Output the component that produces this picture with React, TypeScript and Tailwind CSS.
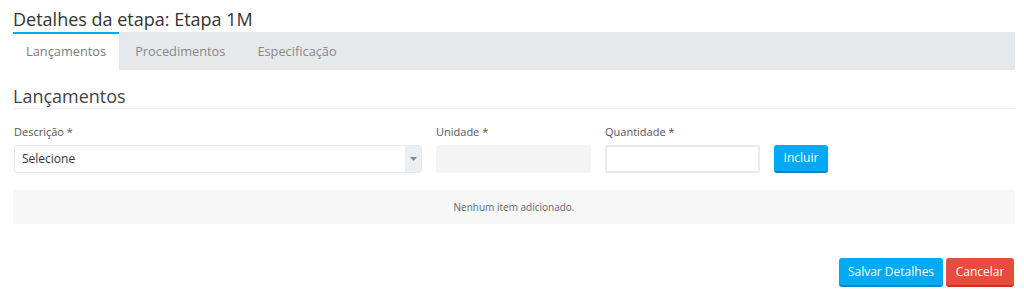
import React from "react";

const tabs = ["Lançamentos", "Procedimentos", "Especificação"];

const App = () => {
  return (
    <div
      className="w-[1024px] h-[295px] bg-white text-[#333] overflow-hidden"
      style={{ fontFamily: '"Open Sans", sans-serif' }}
    >
      <div className="ml-[13px] w-[1002px] pt-[7px]">
        <h1 className="text-[18px] leading-[25px] text-[#333] h-[25px]">
          Detalhes da etapa: Etapa 1M
        </h1>
        <div className="flex bg-[#e6e9ec] h-[38px]">
          {tabs.map((t, i) => (
            <div
              key={t}
              className={
                i === 0
                  ? "bg-white border-t-2 border-[#03a9f4] px-[13px] flex items-center text-[12.8px] text-[#7a7a7a]"
                  : "px-[16px] pt-[2px] flex items-center text-[12.8px] text-[#888]"
              }
            >
              {t}
            </div>
          ))}
        </div>

        <h2 className="mt-[14px] text-[18px] leading-[24px] text-[#444] border-b border-[#eeeeee]">
          Lançamentos
        </h2>

        <div className="mt-[15px] flex items-end gap-[14px]">
          <div className="w-[409px]">
            <div className="text-[11px] leading-[15px] text-[#555] mb-[6px] pl-[1px]">
              Descrição *
            </div>
            <div className="ml-[1px] h-[28px] border border-[#e5e9ec] rounded-[3px] flex items-center">
              <div className="flex-1 pl-[7px] text-[12px] text-[#333]">Selecione</div>
              <div className="w-[16px] h-full bg-[#eceff1] flex items-center justify-center">
                <svg width="7" height="4" viewBox="0 0 7 4">
                  <path d="M0 0h7L3.5 4z" fill="#888" />
                </svg>
              </div>
            </div>
          </div>
          <div className="w-[155px]">
            <div className="text-[11px] leading-[15px] text-[#555] mb-[6px]">Unidade *</div>
            <div className="h-[28px] bg-[#f4f4f4] rounded-[3px]" />
          </div>
          <div className="w-[155px]">
            <div className="text-[11px] leading-[15px] text-[#555] mb-[6px]">Quantidade *</div>
            <div className="h-[28px] border-2 border-[#e8ecef] rounded-[2px] bg-white" />
          </div>
          <button className="w-[54px] h-[28px] bg-[#03a9f4] border-b-2 border-[#0288d1] rounded-[3px] text-white text-[12px]">
            Incluir
          </button>
        </div>

        <div className="mt-[17px] h-[34px] bg-[#f7f7f7] flex items-center justify-center text-[10px] text-[#666]">
          Nenhum item adicionado.
        </div>

        <div className="mt-[34px] flex justify-end gap-[3px] pr-[1px]">
          <button className="w-[104px] h-[29px] bg-[#03a9f4] border-b-2 border-[#0288d1] rounded-[3px] text-white text-[12px]">
            Salvar Detalhes
          </button>
          <button className="w-[68px] h-[29px] bg-[#e74c3c] border-b-2 border-[#d62c1a] rounded-[3px] text-white text-[12px]">
            Cancelar
          </button>
        </div>
      </div>
    </div>
  );
};

export default App;
